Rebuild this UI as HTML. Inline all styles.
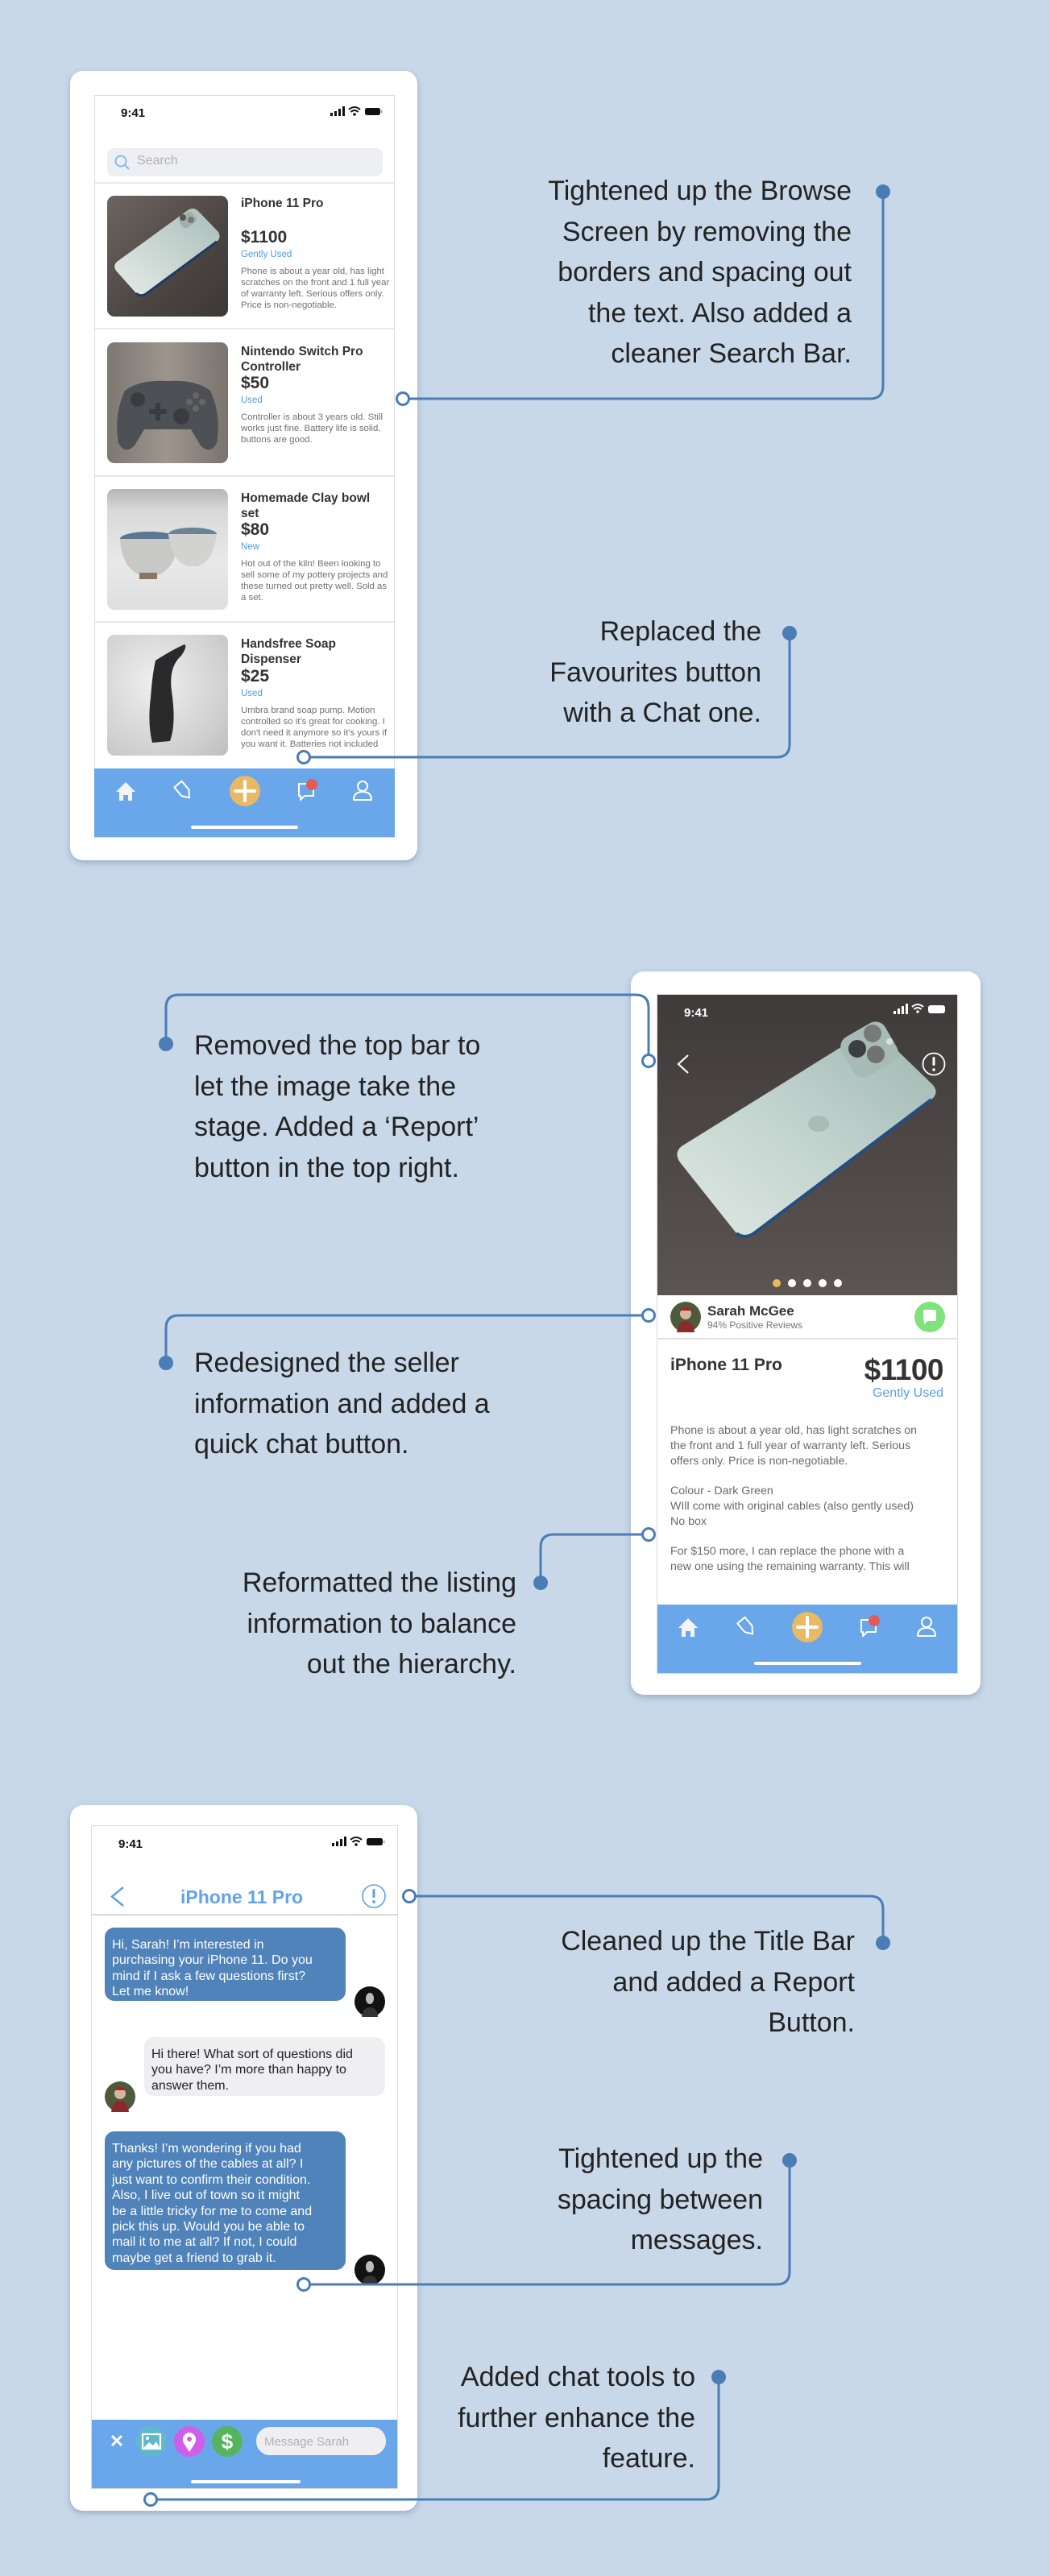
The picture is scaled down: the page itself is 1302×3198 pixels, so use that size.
<!DOCTYPE html>
<html><head><meta charset="utf-8">
<style>
*{margin:0;padding:0;box-sizing:border-box}
html,body{width:1302px;height:3198px;background:#c8d8e9;overflow:hidden}
body{position:relative;font-family:"Liberation Sans",Arial,sans-serif}
.abs{position:absolute}
.card{position:absolute;background:#fff;border-radius:16px;box-shadow:0 3px 8px rgba(60,90,130,.35)}
.screen{position:absolute;background:#fff;border:1.5px solid #dcdcdc;overflow:hidden}
.note{position:absolute;font-size:34px;line-height:50.5px;color:#222;white-space:nowrap}
.r{text-align:right}
.t{position:absolute;white-space:nowrap}
.sep{position:absolute;height:2px;background:#e8e8ea}
.img{position:absolute;border-radius:9px;overflow:hidden}
.title{font-size:15.5px;font-weight:bold;color:#333;line-height:19px}
.price{font-size:21px;font-weight:bold;color:#333;line-height:24px}
.cond{font-size:11.5px;color:#4f9be8;line-height:14px}
.desc{font-size:11.4px;color:#707070;line-height:14px}
.bub{position:absolute;border-radius:12px;font-size:16px;line-height:19.4px;padding:12px 0 0 9px;white-space:nowrap}
</style></head><body>

<!-- ============ PHONE 1 ============ -->
<div class="card" style="left:87px;top:88px;width:431px;height:980px"></div>
<div class="screen" style="left:117px;top:118px;width:373px;height:922px">
  <div class="t" style="left:32px;top:13px;font-size:15px;font-weight:bold;color:#111">9:41</div>
  <svg class="abs" style="left:290px;top:12px" width="70" height="16">
    <rect x="2" y="9" width="3" height="4" fill="#111"/><rect x="7" y="7" width="3" height="6" fill="#111"/><rect x="12" y="4" width="3" height="9" fill="#111"/><rect x="17" y="1" width="3" height="12" fill="#111"/>
    <path d="M25,5 Q32,-1 39,5 M27.5,8 Q32,4 36.5,8" stroke="#111" stroke-width="2" fill="none"/><circle cx="32" cy="11" r="1.8" fill="#111"/>
    <rect x="45" y="3" width="19" height="9" rx="2.5" fill="#111"/><rect x="65" y="6" width="1.5" height="3" fill="#999"/>
  </svg>
  <div class="abs" style="left:15px;top:65px;width:342px;height:35px;background:#eeeff3;border-radius:8px"></div>
  <svg class="abs" style="left:23px;top:72px" width="22" height="22"><circle cx="9" cy="9" r="6.5" stroke="#8ab8ec" stroke-width="2" fill="none"/><path d="M13.5,13.5 L19,19" stroke="#8ab8ec" stroke-width="2.2"/></svg>
  <div class="t" style="left:52px;top:72px;font-size:16px;color:#b0b0b6">Search</div>
</div>
<div class="sep" style="left:118px;top:226px;width:371px"></div>
<div class="sep" style="left:118px;top:407px;width:371px"></div>
<div class="sep" style="left:118px;top:590px;width:371px"></div>
<div class="sep" style="left:118px;top:771px;width:371px"></div>

<div class="img" style="left:133px;top:243px;width:150px;height:150px;background:linear-gradient(135deg,#6d6560,#4b4542 60%,#3d3836)">
  <svg width="150" height="150"><defs><linearGradient id="ph1" x1="0" y1="1" x2="1" y2="0"><stop offset="0" stop-color="#e6ece9"/><stop offset="1" stop-color="#a9bdb8"/></linearGradient></defs>
  <path d="M12,82 L100,18 Q108,13 114,20 L138,45 Q142,52 136,57 L48,122 Q41,126 36,121 L11,93 Q7,87 12,82Z" fill="url(#ph1)"/><path d="M136,57 L48,122 Q41,126 36,121" stroke="#1d3a66" stroke-width="3" fill="none"/>
  <rect x="90" y="22" width="20" height="16" rx="5" fill="#9fb0ab" transform="rotate(-36 100 30)"/><circle cx="94" cy="27" r="4" fill="#555"/><circle cx="104" cy="30" r="4" fill="#777"/></svg>
</div>
<div class="img" style="left:133px;top:425px;width:150px;height:150px;background:linear-gradient(90deg,#7e7873,#9d958e 50%,#7a736e)">
  <svg width="150" height="150"><path d="M22,60 Q40,46 75,48 Q110,46 128,60 Q142,90 136,125 Q128,140 116,128 L104,108 L46,108 L34,128 Q22,140 14,125 Q8,90 22,60Z" fill="#4d5054"/><circle cx="38" cy="71" r="9" fill="#3a3c3f"/><circle cx="92" cy="92" r="10" fill="#3a3c3f"/><path d="M52,83 h8 v-8 h6 v8 h8 v6 h-8 v8 h-6 v-8 h-8z" fill="#3a3c3f"/><circle cx="110" cy="66" r="4" fill="#666"/><circle cx="118" cy="74" r="4" fill="#666"/><circle cx="102" cy="74" r="4" fill="#666"/><circle cx="110" cy="82" r="4" fill="#666"/></svg>
</div>
<div class="img" style="left:133px;top:607px;width:150px;height:150px;background:linear-gradient(180deg,#b8b6b4 0%,#d9d9d9 18%,#e9e9e9 60%,#dedede)">
  <svg width="150" height="150"><ellipse cx="52" cy="62" rx="36" ry="9" fill="#5b7690"/><path d="M16,62 Q18,100 44,108 L60,108 Q86,100 88,62Z" fill="#c8c9c6"/><ellipse cx="106" cy="56" rx="30" ry="8" fill="#6a8296"/><path d="M76,56 Q80,90 100,96 L112,96 Q132,90 136,56Z" fill="#d2d3d0"/><rect x="40" y="104" width="22" height="8" fill="#8a7561"/></svg>
</div>
<div class="img" style="left:133px;top:788px;width:150px;height:150px;background:radial-gradient(circle at 40% 40%,#efefef,#cfcfcf 70%,#bdbdbd)">
  <svg width="150" height="150"><path d="M60,32 Q82,18 96,12 Q100,14 92,26 Q76,40 80,70 Q86,110 78,132 L56,134 Q50,110 54,78 Q56,50 60,32Z" fill="#2a2a2c"/></svg>
</div>

<div class="t title" style="left:299px;top:243px">iPhone 11 Pro</div>
<div class="t price" style="left:299px;top:283px">$1100</div>
<div class="t cond" style="left:299px;top:309px">Gently Used</div>
<div class="t desc" style="left:299px;top:330px">Phone is about a year old, has light<br>scratches on the front and 1 full year<br>of warranty left. Serious offers only.<br>Price is non-negotiable.</div>

<div class="t title" style="left:299px;top:427px">Nintendo Switch Pro<br>Controller</div>
<div class="t price" style="left:299px;top:464px">$50</div>
<div class="t cond" style="left:299px;top:490px">Used</div>
<div class="t desc" style="left:299px;top:511px">Controller is about 3 years old. Still<br>works just fine. Battery life is solid,<br>buttons are good.</div>

<div class="t title" style="left:299px;top:609px">Homemade Clay bowl<br>set</div>
<div class="t price" style="left:299px;top:646px">$80</div>
<div class="t cond" style="left:299px;top:672px">New</div>
<div class="t desc" style="left:299px;top:693px">Hot out of the kiln! Been looking to<br>sell some of my pottery projects and<br>these turned out pretty well. Sold as<br>a set.</div>

<div class="t title" style="left:299px;top:790px">Handsfree Soap<br>Dispenser</div>
<div class="t price" style="left:299px;top:828px">$25</div>
<div class="t cond" style="left:299px;top:854px">Used</div>
<div class="t desc" style="left:299px;top:875px">Umbra brand soap pump. Motion<br>controlled so it's great for cooking. I<br>don't need it anymore so it's yours if<br>you want it. Batteries not included</div>

<svg class="abs" style="left:117px;top:954px" width="373" height="85">
  <rect width="373" height="85" fill="#69a7ea"/>
  <path d="M27,29 L39,17 L51,29 H47 V40 H42 V33 H36 V40 H31 V29Z" fill="#f4f4f4"/>
  <g transform="translate(111,28) rotate(-40)"><path d="M-6,-11 H6 V3 L0,11 L-6,3Z" fill="none" stroke="#fff" stroke-width="2" stroke-linejoin="round"/></g>
  <circle cx="187" cy="28" r="19" fill="#e9b964"/><path d="M175,28 H199 M187,16 V40" stroke="#fff" stroke-width="4" stroke-linecap="round"/>
  <path d="M254,19 H272 V34 H261 L256,39 V34 H254Z" fill="none" stroke="#fff" stroke-width="2" stroke-linejoin="round"/><circle cx="270" cy="20" r="7" fill="#e35b57"/>
  <circle cx="333" cy="22" r="6" fill="none" stroke="#fff" stroke-width="2"/><path d="M322,39 Q322,29 333,29 Q344,29 344,39Z" fill="none" stroke="#fff" stroke-width="2" stroke-linejoin="round"/>
  <rect x="120" y="71" width="133" height="4" rx="2" fill="#fff"/>
</svg>

<!-- ============ PHONE 2 ============ -->
<div class="card" style="left:783px;top:1206px;width:434px;height:898px"></div>
<div class="screen" style="left:815px;top:1234px;width:374px;height:844px">
  <svg class="abs" style="left:0;top:0" width="374" height="373">
    <defs><linearGradient id="bg2" x1="0" y1="0" x2="0" y2="1"><stop offset="0" stop-color="#3f3b3a"/><stop offset="1" stop-color="#5a5452"/></linearGradient>
    <linearGradient id="ph2" x1="0" y1="1" x2="1" y2="0"><stop offset="0" stop-color="#dfe8e4"/><stop offset=".5" stop-color="#c2d3ce"/><stop offset="1" stop-color="#9fb7b1"/></linearGradient></defs>
    <rect width="374" height="373" fill="url(#bg2)"/>
    <path d="M30,188 L255,48 Q268,40 278,50 L342,112 Q350,122 340,130 L120,296 Q108,304 98,296 L28,208 Q20,196 30,188Z" fill="url(#ph2)"/>
    <path d="M340,130 L120,296 Q108,304 98,296" stroke="#254d80" stroke-width="4" fill="none"/>
    <rect x="232" y="40" width="62" height="56" rx="14" fill="#a7bbb6" transform="rotate(-30 263 68)"/>
    <circle cx="248" cy="67" r="11" fill="#3c3f40"/><circle cx="267" cy="48" r="11" fill="#777a78"/><circle cx="271" cy="74" r="11" fill="#707370"/><circle cx="288" cy="58" r="4" fill="#ddd"/>
    <ellipse cx="200" cy="160" rx="13" ry="10" fill="#a9bcb8"/>
    <text x="33" y="27" font-family="Liberation Sans" font-weight="bold" font-size="15" fill="#fff">9:41</text>
    <rect x="293" y="20" width="3" height="4" fill="#fff"/><rect x="298" y="17" width="3" height="7" fill="#fff"/><rect x="303" y="14" width="3" height="10" fill="#fff"/><rect x="308" y="11" width="3" height="13" fill="#fff"/>
    <path d="M316,15 Q323,9 330,15 M318.5,18 Q323,14 327.5,18" stroke="#fff" stroke-width="2" fill="none"/><circle cx="323" cy="21" r="1.8" fill="#fff"/>
    <rect x="336" y="13" width="21" height="10" rx="3" fill="#fff"/>
    <path d="M38,75 L26,86 L38,97" stroke="#fff" stroke-width="2.2" fill="none"/>
    <circle cx="343" cy="86" r="13.5" stroke="#fff" stroke-width="1.8" fill="none"/><rect x="341.5" y="77" width="3" height="11" rx="1.2" fill="#fff"/><circle cx="343" cy="93" r="1.8" fill="#fff"/>
    <rect x="140" y="350" width="96" height="16" rx="8" fill="#5e5550" opacity=".8"/>
    <circle cx="148" cy="358" r="5" fill="#e9b964"/><circle cx="167" cy="358" r="5" fill="#fff"/><circle cx="186" cy="358" r="5" fill="#fff"/><circle cx="205" cy="358" r="5" fill="#fff"/><circle cx="224" cy="358" r="5" fill="#fff"/>
  </svg>
  <svg class="abs" style="left:16px;top:381px" width="38" height="38"><circle cx="19" cy="19" r="19" fill="#4e5a3c"/><circle cx="19" cy="15" r="7" fill="#d7b4a0"/><path d="M11,11 Q19,2 27,11 Z" fill="#a4262a"/><path d="M8,38 Q10,24 19,24 Q28,24 30,38Z" fill="#8b2a2c"/></svg>
  <div class="t" style="left:62px;top:383px;font-size:17px;font-weight:bold;color:#333">Sarah McGee</div>
  <div class="t" style="left:62px;top:403px;font-size:12px;color:#777">94% Positive Reviews</div>
  <svg class="abs" style="left:319px;top:381px" width="38" height="38"><circle cx="19" cy="19" r="19" fill="#7ee37a"/><path d="M11,12 Q11,10 13,10 H25 Q27,10 27,12 V22 Q27,24 25,24 H16 L12,28 V24 Q11,24 11,22Z" fill="#fff"/></svg>
  <div class="abs" style="left:0;top:426px;width:374px;height:1.5px;background:#e2e2e2"></div>
  <div class="t" style="left:16px;top:448px;font-size:21px;font-weight:bold;color:#333">iPhone 11 Pro</div>
  <div class="t" style="right:17px;top:445px;font-size:37px;font-weight:bold;color:#333;letter-spacing:-.5px">$1100</div>
  <div class="t" style="right:17px;top:486px;font-size:16px;color:#5aa0ea">Gently Used</div>
  <div class="t" style="left:16px;top:532px;font-size:14.2px;line-height:19px;color:#6a6a6a">Phone is about a year old, has light scratches on<br>the front and 1 full year of warranty left. Serious<br>offers only. Price is non-negotiable.<br><div style="height:18px"></div>Colour - Dark Green<br>WIll come with original cables (also gently used)<br>No box<br><div style="height:18px"></div>For $150 more, I can replace the phone with a<br>new one using the remaining warranty. This will</div>
  <svg class="abs" style="left:-1px;top:757px" width="374" height="86">
    <rect width="374" height="86" fill="#69a7ea"/>
    <path d="M27,29 L39,17 L51,29 H47 V40 H42 V33 H36 V40 H31 V29Z" fill="#f4f4f4"/>
    <g transform="translate(112,28) rotate(-40)"><path d="M-6,-11 H6 V3 L0,11 L-6,3Z" fill="none" stroke="#fff" stroke-width="2" stroke-linejoin="round"/></g>
    <circle cx="187" cy="28" r="19" fill="#e9b964"/><path d="M175,28 H199 M187,16 V40" stroke="#fff" stroke-width="4" stroke-linecap="round"/>
    <path d="M254,19 H272 V34 H261 L256,39 V34 H254Z" fill="none" stroke="#fff" stroke-width="2" stroke-linejoin="round"/><circle cx="270" cy="20" r="7" fill="#e35b57"/>
    <circle cx="335" cy="22" r="6" fill="none" stroke="#fff" stroke-width="2"/><path d="M324,39 Q324,29 335,29 Q346,29 346,39Z" fill="none" stroke="#fff" stroke-width="2" stroke-linejoin="round"/>
    <rect x="121" y="71" width="133" height="4" rx="2" fill="#fff"/>
  </svg>
</div>

<!-- ============ PHONE 3 ============ -->
<div class="card" style="left:87px;top:2241px;width:431px;height:876px"></div>
<div class="screen" style="left:113px;top:2266px;width:381px;height:824px">
  <div class="t" style="left:33px;top:14px;font-size:15px;font-weight:bold;color:#111">9:41</div>
  <svg class="abs" style="left:296px;top:12px" width="76" height="16">
    <rect x="2" y="9" width="3" height="4" fill="#111"/><rect x="7" y="7" width="3" height="6" fill="#111"/><rect x="12" y="4" width="3" height="9" fill="#111"/><rect x="17" y="1" width="3" height="12" fill="#111"/>
    <path d="M25,5 Q32,-1 39,5 M27.5,8 Q32,4 36.5,8" stroke="#111" stroke-width="2" fill="none"/><circle cx="32" cy="11" r="1.8" fill="#111"/>
    <rect x="45" y="3" width="20" height="9" rx="2.5" fill="#111"/><rect x="66" y="6" width="1.5" height="3" fill="#999"/>
  </svg>
  <svg class="abs" style="left:20px;top:74px" width="24" height="28"><path d="M19,2 L5,13.5 L19,25" stroke="#5e9fe6" stroke-width="2.5" fill="none"/></svg>
  <div class="t" style="left:110px;top:75px;font-size:23px;font-weight:bold;color:#62a3ea">iPhone 11 Pro</div>
  <svg class="abs" style="left:334px;top:71px" width="32" height="32"><circle cx="16" cy="16" r="14" stroke="#5e9fe6" stroke-width="1.6" fill="none"/><rect x="14.5" y="7" width="3" height="11" rx="1.3" fill="#5e9fe6"/><circle cx="16" cy="23" r="1.9" fill="#5e9fe6"/></svg>
  <div class="abs" style="left:0;top:109px;width:381px;height:2px;background:#d8d8d8"></div>

  <div class="bub" style="left:16px;top:126px;width:299px;height:91px;background:#4f83ba;color:#fff">Hi, Sarah! I’m interested in<br>purchasing your iPhone 11. Do you<br>mind if I ask a few questions first?<br>Let me know!</div>
  <svg class="abs" style="left:326px;top:199px" width="38" height="38"><circle cx="19" cy="19" r="19" fill="#121212"/><ellipse cx="19" cy="15" rx="5" ry="7" fill="#bbb"/><path d="M9,38 Q10,26 19,26 Q28,26 29,38Z" fill="#333"/></svg>

  <div class="bub" style="left:65px;top:262px;width:299px;height:73px;background:#efeff2;color:#222">Hi there! What sort of questions did<br>you have? I’m more than happy to<br>answer them.</div>
  <svg class="abs" style="left:16px;top:317px" width="38" height="38"><circle cx="19" cy="19" r="19" fill="#4e5a3c"/><circle cx="19" cy="15" r="7" fill="#d7b4a0"/><path d="M11,11 Q19,2 27,11 Z" fill="#a4262a"/><path d="M8,38 Q10,24 19,24 Q28,24 30,38Z" fill="#8b2a2c"/></svg>

  <div class="bub" style="left:16px;top:379px;width:299px;height:172px;background:#4f83ba;color:#fff">Thanks! I’m wondering if you had<br>any pictures of the cables at all? I<br>just want to confirm their condition.<br>Also, I live out of town so it might<br>be a little tricky for me to come and<br>pick this up. Would you be able to<br>mail it to me at all? If not, I could<br>maybe get a friend to grab it.</div>
  <svg class="abs" style="left:326px;top:532px" width="38" height="38"><circle cx="19" cy="19" r="19" fill="#121212"/><ellipse cx="19" cy="15" rx="5" ry="7" fill="#bbb"/><path d="M9,38 Q10,26 19,26 Q28,26 29,38Z" fill="#333"/></svg>

  <svg class="abs" style="left:-1px;top:737px" width="381" height="86">
    <rect width="381" height="86" fill="#69a7ea"/>
    <path d="M26,20 L38,32 M38,20 L26,32" stroke="#fff" stroke-width="3"/>
    <circle cx="75" cy="27" r="19" fill="#5fb8cc"/><rect x="64" y="18" width="22" height="18" fill="none" stroke="#fff" stroke-width="2.2"/><circle cx="70" cy="23" r="2" fill="#fff"/><path d="M65,35 L72,28 L77,32 L81,27 L85,35Z" fill="#fff"/>
    <circle cx="122" cy="27" r="19" fill="#d15eea"/><path d="M122,40 L115,29 Q112,22 117,18 Q122,14 127,18 Q132,22 129,29Z" fill="#fff"/><circle cx="122" cy="24" r="3" fill="#d15eea"/>
    <circle cx="169" cy="27" r="19" fill="#55b55c"/><text x="169" y="36" text-anchor="middle" font-family="Liberation Sans" font-weight="bold" font-size="26" fill="#fff">$</text>
    <rect x="205" y="9" width="161" height="35" rx="17" fill="#efeff2"/>
    <text x="215" y="32" font-family="Liberation Sans" font-size="15" fill="#b0b0b4">Message Sarah</text>
    <rect x="124" y="75" width="136" height="4" rx="2" fill="#fff"/>
  </svg>
</div>

<!-- ============ NOTES ============ -->
<div class="note r" style="right:245px;top:212px">Tightened up the Browse<br>Screen by removing the<br>borders and spacing out<br>the text. Also added a<br>cleaner Search Bar.</div>
<div class="note r" style="right:357px;top:759px">Replaced the<br>Favourites button<br>with a Chat one.</div>

<div class="note" style="left:241px;top:1273px">Removed the top bar to<br>let the image take the<br>stage. Added a ‘Report’<br>button in the top right.</div>
<div class="note" style="left:241px;top:1667px">Redesigned the seller<br>information and added a<br>quick chat button.</div>
<div class="note r" style="right:661px;top:1940px">Reformatted the listing<br>information to balance<br>out the hierarchy.</div>

<div class="note r" style="right:241px;top:2385px">Cleaned up the Title Bar<br>and added a Report<br>Button.</div>
<div class="note r" style="right:355px;top:2655px">Tightened up the<br>spacing between<br>messages.</div>
<div class="note r" style="right:439px;top:2926px">Added chat tools to<br>further enhance the<br>feature.</div>

<!-- ============ CONNECTORS ============ -->
<svg class="abs" style="left:0;top:0" width="1302" height="3198">
  <g stroke="#4a7db5" stroke-width="3" fill="none">
    <path d="M500,495 H1080 Q1096,495 1096,479 V238"/>
    <path d="M377,940 H964 Q980,940 980,924 V786"/>
    <path d="M206,1296 V1251 Q206,1235 222,1235 H789 Q805,1235 805,1251 V1317"/>
    <path d="M206,1692 V1649 Q206,1633 222,1633 H805"/>
    <path d="M671,1965 V1921 Q671,1905 687,1905 H805"/>
    <path d="M508,2354 H1080 Q1096,2354 1096,2370 V2412"/>
    <path d="M377,2836 H964 Q980,2836 980,2820 V2682"/>
    <path d="M187,3103 H876 Q892,3103 892,3087 V2951"/>
  </g>
  <g fill="#4a7db5">
    <circle cx="1096" cy="238" r="9"/><circle cx="980" cy="786" r="9"/>
    <circle cx="206" cy="1296" r="9"/><circle cx="206" cy="1692" r="9"/><circle cx="671" cy="1965" r="9"/>
    <circle cx="1096" cy="2412" r="9"/><circle cx="980" cy="2682" r="9"/><circle cx="892" cy="2951" r="9"/>
  </g>
  <g fill="#fff" stroke="#4a7db5" stroke-width="3">
    <circle cx="500" cy="495" r="7.5"/><circle cx="377" cy="940" r="7.5"/>
    <circle cx="805" cy="1317" r="7.5"/><circle cx="805" cy="1633" r="7.5"/><circle cx="805" cy="1905" r="7.5"/>
    <circle cx="508" cy="2354" r="7.5"/><circle cx="377" cy="2836" r="7.5"/><circle cx="187" cy="3103" r="7.5"/>
  </g>
</svg>
</body></html>
